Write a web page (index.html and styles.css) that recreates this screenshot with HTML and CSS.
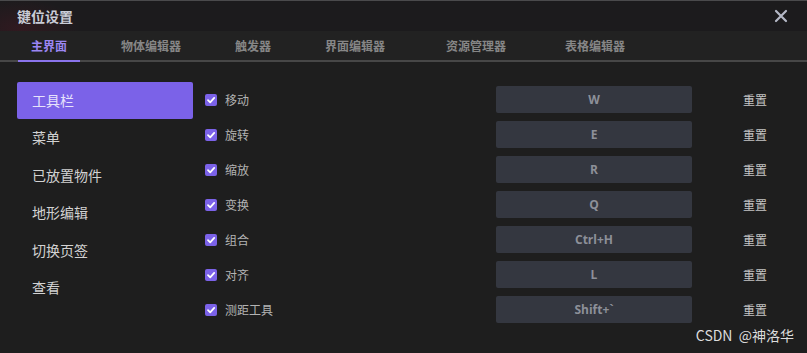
FILE: index.html
```html
<!DOCTYPE html>
<html lang="zh-CN">
<head>
    <meta charset="UTF-8">
    <title>键位设置</title>
    <link rel="stylesheet" href="styles.css">
</head>
<body>

<div class="dialog">
    <div class="header">
        <span class="title">键位设置</span>
        <svg class="close" width="14" height="14" viewBox="0 0 14 14">
            <path d="M2 2 L12 12 M12 2 L2 12" stroke="#b4b8c6" stroke-width="2.2" stroke-linecap="round"/>
        </svg>
    </div>

    <div class="tabs">
        <div class="tab active">主界面</div>
        <div class="tab">物体编辑器</div>
        <div class="tab">触发器</div>
        <div class="tab">界面编辑器</div>
        <div class="tab wide">资源管理器</div>
        <div class="tab wide last">表格编辑器</div>
    </div>

    <div class="content">
        <ul class="sidebar">
            <li class="active">工具栏</li>
            <li>菜单</li>
            <li>已放置物件</li>
            <li>地形编辑</li>
            <li>切换页签</li>
            <li>查看</li>
        </ul>

        <div class="keys">
            <div class="row">
                <label class="check"><span class="box"><svg viewBox="0 0 12 12"><path d="M3 6.2 L5.2 8.3 L9.2 3.9" /></svg></span>移动</label>
                <div class="key">W</div>
                <span class="reset">重置</span>
            </div>
            <div class="row">
                <label class="check"><span class="box"><svg viewBox="0 0 12 12"><path d="M3 6.2 L5.2 8.3 L9.2 3.9" /></svg></span>旋转</label>
                <div class="key">E</div>
                <span class="reset">重置</span>
            </div>
            <div class="row">
                <label class="check"><span class="box"><svg viewBox="0 0 12 12"><path d="M3 6.2 L5.2 8.3 L9.2 3.9" /></svg></span>缩放</label>
                <div class="key">R</div>
                <span class="reset">重置</span>
            </div>
            <div class="row">
                <label class="check"><span class="box"><svg viewBox="0 0 12 12"><path d="M3 6.2 L5.2 8.3 L9.2 3.9" /></svg></span>变换</label>
                <div class="key">Q</div>
                <span class="reset">重置</span>
            </div>
            <div class="row">
                <label class="check"><span class="box"><svg viewBox="0 0 12 12"><path d="M3 6.2 L5.2 8.3 L9.2 3.9" /></svg></span>组合</label>
                <div class="key">Ctrl+H</div>
                <span class="reset">重置</span>
            </div>
            <div class="row">
                <label class="check"><span class="box"><svg viewBox="0 0 12 12"><path d="M3 6.2 L5.2 8.3 L9.2 3.9" /></svg></span>对齐</label>
                <div class="key">L</div>
                <span class="reset">重置</span>
            </div>
            <div class="row">
                <label class="check"><span class="box"><svg viewBox="0 0 12 12"><path d="M3 6.2 L5.2 8.3 L9.2 3.9" /></svg></span>测距工具</label>
                <div class="key">Shift+`</div>
                <span class="reset">重置</span>
            </div>
        </div>
    </div>

    <div class="watermark">CSDN&nbsp; @神洛华</div>
</div>

</body>
</html>
```

FILE: styles.css
```css
body {
    margin: 0;
    background-color: #1e1e1e;
    font-family: "Noto Sans CJK SC", "Noto Sans", sans-serif;
}
.dialog {
    position: relative;
    width: 807px;
    height: 353px;
    overflow: hidden;
}
.header {
    height: 30px;
    border-top: 1px solid #4a4a4c;
    background: radial-gradient(ellipse 60px 30px at 20px 28px, rgba(110, 20, 40, 0.25), transparent),
                #1c1b1d;
    display: flex;
    align-items: center;
    justify-content: space-between;
    padding: 0 19px 0 17px;
}
.title {
    font-size: 14px;
    font-weight: bold;
    color: #c9ccd6;
    line-height: 1;
    margin-top: -1px;
}
.close {
    display: block;
}
.tabs {
    height: 29px;
    background-color: #222222;
    border-bottom: 2px solid #474747;
    display: flex;
    padding-left: 18px;
    gap: 28px;
}
.tab {
    padding: 0 13px;
    font-size: 12px;
    font-weight: bold;
    color: #868686;
    display: flex;
    align-items: center;
    border-bottom: 2px solid transparent;
    margin-bottom: -2px;
}
.tab.wide {
    margin-left: 7px;
}
.tab.last {
    margin-left: 5px;
}
.tab.active {
    color: #9b86f2;
    border-bottom-color: #8a74ec;
}
.content {
    display: flex;
    padding: 20px 0 0 17px;
}
.sidebar {
    list-style: none;
    margin: 0;
    padding: 0;
    width: 176px;
}
.sidebar li {
    height: 37.4px;
    line-height: 37px;
    padding-left: 15px;
    font-size: 14px;
    color: #d2d2d2;
    border-radius: 2px;
}
.sidebar li.active {
    height: 37px;
    background-color: #7b62e8;
    color: #e6e2fb;
    margin-bottom: 0.4px;
}
.keys {
    margin-left: 12px;
    padding-top: 4px;
    display: flex;
    flex-direction: column;
    gap: 8px;
}
.row {
    display: grid;
    grid-template-columns: 291px 196px 51px auto;
    height: 27px;
    align-items: center;
}
.check {
    display: flex;
    align-items: center;
    gap: 8px;
    font-size: 12px;
    color: #b3b3b3;
}
.box {
    width: 12px;
    height: 12px;
    border-radius: 2px;
    background-color: #7b62e8;
    display: block;
}
.box svg {
    display: block;
    width: 12px;
    height: 12px;
    fill: none;
    stroke: #ffffff;
    stroke-width: 1.8;
    stroke-linecap: round;
    stroke-linejoin: round;
}
.key {
    height: 27px;
    line-height: 27px;
    background-color: #343740;
    border-radius: 2px;
    text-align: center;
    font-family: "Open Sans", sans-serif;
    font-size: 12px;
    font-weight: bold;
    color: #8d9099;
}
.reset {
    grid-column: 4;
    font-size: 12px;
    color: #c4c4c4;
}
.watermark {
    position: absolute;
    right: 13px;
    bottom: 8px;
    font-size: 14px;
    color: #dcdcdc;
    font-family: "Noto Sans CJK SC", sans-serif;
}
```
